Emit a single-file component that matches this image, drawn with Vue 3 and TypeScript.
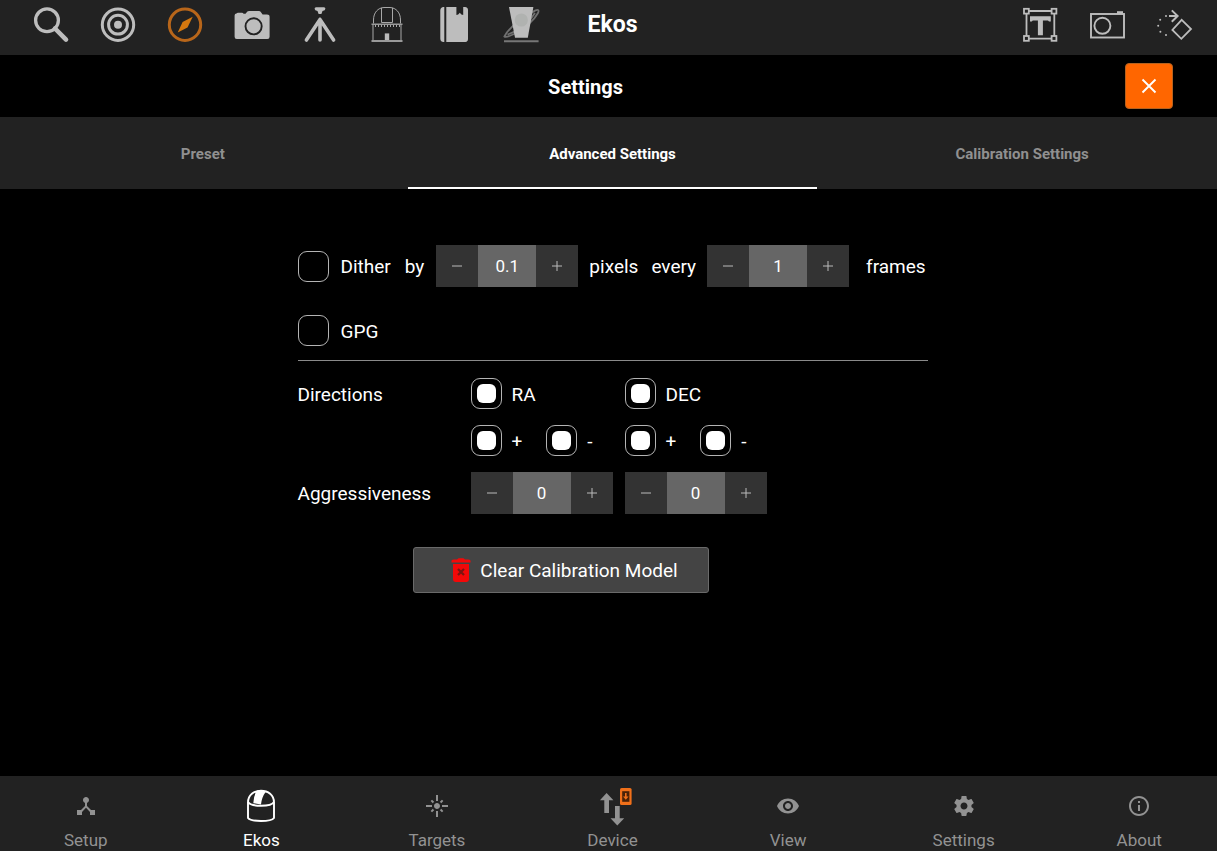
<script setup lang="ts">
import { reactive, ref } from 'vue'

interface Icon {
  label: string
  body: string
  active?: boolean
}

const modules: Icon[] = [
  {
    label: 'Search',
    body: '<circle cx="14" cy="13.3" r="11.4" fill="none" stroke="currentColor" stroke-width="3.3"/><path d="M22 21.5 L33 32.6" stroke="currentColor" stroke-width="4.6" stroke-linecap="round"/>',
  },
  {
    label: 'Focus',
    body: '<g fill="none" stroke="currentColor" stroke-width="3"><circle cx="18" cy="17.7" r="15.7"/><circle cx="18" cy="17.7" r="9.4"/></g><circle cx="18" cy="17.7" r="4" fill="currentColor"/>',
  },
  {
    label: 'Guide',
    active: true,
    body: '<circle cx="18" cy="17.7" r="15.7" fill="none" stroke="currentColor" stroke-width="3"/><path d="M25.7 9.7 L20.5 20.4 L10.7 25.4 L15.6 15Z" fill="#d4780f"/>',
  },
  {
    label: 'Capture',
    body: '<path d="M2.5 6.5 Q3 5.8 4 5.8 H8 Q9 5.8 9.6 6.7 H11.5 L13.4 4.6 Q14 4 15 4 H25 Q26 4 26.6 4.7 L28.6 7.6 H33 Q35.6 7.6 35.6 10 V29.8 Q35.6 32 33.4 32 H2.8 Q.6 32 .6 29.8 V8.6 Q.6 6.5 2.5 6.5Z" fill="currentColor"/><circle cx="19.6" cy="19.3" r="8.1" fill="none" stroke="#222" stroke-width="1.9"/>',
  },
  {
    label: 'Mount',
    body: '<path d="M14 .3 H22 Q23.4 .3 23.4 1.8 Q23.4 3.6 20.5 4 L19.4 7 H16.6 L15.5 4 Q12.6 3.6 12.6 1.8 Q12.6 .3 14 .3Z" fill="currentColor"/><path d="M18 12.5 L4.4 33 M18 12.5 L31.6 33 M18 12.5 V33" fill="none" stroke="currentColor" stroke-width="3.6" stroke-linecap="round"/>',
  },
  {
    label: 'Observatory',
    body: '<g fill="none" stroke="#a8a8a8" stroke-width="1"><path d="M4.5 16.5 V13 C4.5 5.5 9 .8 15 .5 H21 C27 .8 31.5 5.5 31.5 13 V16.5"/><path d="M12.5 .8 V15.5 H23.5 V.8"/><path d="M4 18 V33 M32 18 V33"/></g><path d="M2.5 16.4 H33.5 V18 H2.5Z M2.5 33 H33.5 V35 H2.5Z" fill="#9a9a9a"/><path d="M6 19 H31" stroke="#a8a8a8" stroke-width="2" stroke-dasharray="1 2"/><path d="M15.8 26.4 H20.2 V33 H15.8Z" fill="#bbb"/>',
  },
  {
    label: 'Logs',
    body: '<path d="M8.3 0 V35 H7 Q4.3 34.5 4.3 31.5 V3.5 Q4.3 .5 7 0Z M10.3 0 H20.4 V8 L22.2 7.6 L23.8 5.7 L25.4 7.6 L27.2 8 V0 H29 Q32 .3 32 3 V32 Q32 34.7 29.4 35 H10.3Z" fill="currentColor"/>',
  },
  {
    label: 'Planner',
    body: '<path d="M1.4 29.5 Q7 18 32 3.6 Q37 1.5 35 6 Q29 17 11 27 Q3 31 1.4 29.5Z M4.5 27.5 Q22 22 32 6" fill="none" stroke="#707070" stroke-width="1.8"/><path d="M6 0 H30.4 L24.8 30.7 H12Z" fill="currentColor"/><circle cx="18.3" cy="13" r="6.6" fill="#b0b2b0"/><path d="M1 34.2 H35.6" stroke="#777" stroke-width="1.9"/>',
  },
]

const tools: Icon[] = [
  {
    label: 'Labels',
    body: '<g fill="none" stroke="currentColor" stroke-width="1.8"><path d="M7 4 H30 M7 31.6 H30 M4.5 7 V29 M32.3 7 V29"/><rect x="2" y="1.8" width="4.8" height="4.8"/><rect x="29.6" y="1.8" width="4.8" height="4.8"/><rect x="2" y="29" width="4.8" height="4.8"/><rect x="29.6" y="29" width="4.8" height="4.8"/></g><path d="M8 9.3 H28.8 V14.6 H27 L26 13.4 H20.9 V28.2 H15.9 V13.4 H10.8 L9.8 14.6 H8Z" fill="currentColor"/>',
  },
  {
    label: 'Field of view',
    body: '<g fill="none" stroke="currentColor" stroke-width="1.9"><rect x="2" y="7" width="33" height="23.5"/><circle cx="13.4" cy="18.8" r="8"/></g><path d="M28 4.2 H34 V7 H28Z" fill="currentColor"/>',
  },
  {
    label: 'Rotate',
    body: '<g fill="none" stroke="currentColor" stroke-width="2"><path d="M25.7 12.9 L35 22 L25.3 31.8 L16.4 23Z" stroke-width="1.8"/><path d="M13 9 H21.5 M15.8 3.4 L21.6 9 L15.8 14.8"/></g><g fill="currentColor"><circle cx="10" cy="9" r="1"/><circle cx="4.2" cy="12.7" r="1"/><circle cx="2.2" cy="18.7" r="1"/><circle cx="4.4" cy="24.7" r="1"/><circle cx="10" cy="28" r="1"/></g>',
  },
]

const sections: Icon[] = [
  {
    label: 'Setup',
    body: '<path transform="translate(6 6)" fill="currentColor" d="M17 16l-4-4V8.82C14.16 8.4 15 7.3 15 6c0-1.66-1.34-3-3-3S9 4.34 9 6c0 1.3.84 2.4 2 2.82V12l-4 4H3v5h5v-3.05l4-4.2 4 4.2V21h5v-5h-4z"/>',
  },
  {
    label: 'Ekos',
    active: true,
    body: '<g fill="none" stroke="currentColor" stroke-width="1.9"><path d="M5 30 V14.5 C5 7 11 2.7 18 2.7 C25 2.7 31 7 31 14.5 V30 C28 34 8 34 5 30Z"/><path d="M5 14 C8 19 28 19 31 14"/></g><path d="M14 2.6 Q19 1.8 22.8 3.7 Q18.8 9 18 16.4 L10.3 15.2 Q10.5 7.5 14 2.6Z" fill="currentColor"/>',
  },
  {
    label: 'Targets',
    body: '<path transform="translate(6 6)" fill="currentColor" d="M7 11H1v2h6v-2zm2.17-3.24L7.05 5.64 5.64 7.05l2.12 2.12 1.41-1.41zM13 1h-2v6h2V1zm5.36 6.05l-1.41-1.41-2.12 2.12 1.41 1.41 2.12-2.12zM17 11v2h6v-2h-6zm-5-2c-1.66 0-3 1.34-3 3s1.34 3 3 3 3-1.34 3-3-1.34-3-3-3zm2.83 7.24l2.12 2.12 1.41-1.41-2.12-2.12-1.41 1.41zm-9.19.71l1.41 1.41 2.12-2.12-1.41-1.41-2.12 2.12zM11 23h2v-6h-2v6z"/>',
  },
  {
    label: 'Device',
    body: '<path d="M12.6 5 L19.4 12.3 H15 V25 H10.3 V12.3 H5.9Z M21 18 H25.7 V30.3 H30.2 L23.3 37.4 L16.5 30.3 H21Z" fill="currentColor"/><rect x="26" y="0" width="11.6" height="17" rx="1.6" fill="#f0701a"/><rect x="28.2" y="3.2" width="7.2" height="10.6" fill="#4a2208"/><path d="M31 5 H32.6 V8.6 H34.6 L31.8 11.8 L29 8.6 H31Z" fill="#f0701a"/>',
  },
  {
    label: 'View',
    body: '<path transform="translate(6 6)" fill="currentColor" d="M12 4.5C7 4.5 2.73 7.61 1 12c1.73 4.39 6 7.5 11 7.5s9.27-3.11 11-7.5c-1.73-4.39-6-7.5-11-7.5zM12 17c-2.76 0-5-2.24-5-5s2.24-5 5-5 5 2.24 5 5-2.24 5-5 5zm0-8c-1.66 0-3 1.34-3 3s1.34 3 3 3 3-1.34 3-3-1.34-3-3-3z"/>',
  },
  {
    label: 'Settings',
    body: '<path transform="translate(6 6)" fill="currentColor" d="M19.43 12.98c.04-.32.07-.64.07-.98s-.03-.66-.07-.98l2.11-1.65c.19-.15.24-.42.12-.64l-2-3.46c-.12-.22-.39-.3-.61-.22l-2.49 1c-.52-.4-1.08-.73-1.69-.98l-.38-2.65C14.46 2.18 14.25 2 14 2h-4c-.25 0-.46.18-.49.42l-.38 2.65c-.61.25-1.17.59-1.69.98l-2.49-1c-.23-.09-.49 0-.61.22l-2 3.46c-.13.22-.07.49.12.64l2.11 1.65c-.04.32-.07.65-.07.98s.03.66.07.98l-2.11 1.65c-.19.15-.24.42-.12.64l2 3.46c.12.22.39.3.61.22l2.49-1c.52.4 1.08.73 1.69.98l.38 2.65c.03.24.24.42.49.42h4c.25 0 .46-.18.49-.42l.38-2.65c.61-.25 1.17-.59 1.69-.98l2.49 1c.23.09.49 0 .61-.22l2-3.46c.12-.22.07-.49-.12-.64l-2.11-1.65zM12 15.5c-1.93 0-3.5-1.57-3.5-3.5s1.57-3.5 3.5-3.5 3.5 1.57 3.5 3.5-1.57 3.5-3.5 3.5z"/>',
  },
  {
    label: 'About',
    body: '<path transform="translate(6 6)" fill="currentColor" d="M11 7h2v2h-2zm0 4h2v6h-2zm1-9C6.48 2 2 6.48 2 12s4.48 10 10 10 10-4.48 10-10S17.52 2 12 2zm0 18c-4.41 0-8-3.59-8-8s3.59-8 8-8 8 3.59 8 8-3.59 8-8 8z"/>',
  },
]

const tabs = ['Preset', 'Advanced Settings', 'Calibration Settings']
const currentTab = ref('Advanced Settings')

type NumberKey = 'ditherPixels' | 'ditherFrames' | 'raAggr' | 'decAggr'

const values = reactive<Record<NumberKey, number>>({
  ditherPixels: 0.1,
  ditherFrames: 1,
  raAggr: 0,
  decAggr: 0,
})
const steps: Record<NumberKey, number> = { ditherPixels: 0.1, ditherFrames: 1, raAggr: 0.1, decAggr: 0.1 }

const dither = ref(false)
const gpg = ref(false)

const axes = reactive([
  { name: 'RA', key: 'raAggr' as NumberKey, on: true, plus: true, minus: true },
  { name: 'DEC', key: 'decAggr' as NumberKey, on: true, plus: true, minus: true },
])

function bump(key: NumberKey, sign: number) {
  values[key] = Math.max(0, Math.round((values[key] + sign * steps[key]) * 10) / 10)
}
</script>

<template>
  <div class="app">
    <header class="topbar">
      <div class="modules">
        <button v-for="m in modules" :key="m.label" type="button" class="icon-btn" :class="{ active: m.active }" :aria-label="m.label">
          <svg viewBox="0 0 36 36" v-html="m.body"></svg>
        </button>
      </div>
      <h1>Ekos</h1>
      <div class="tools">
        <button v-for="t in tools" :key="t.label" type="button" class="icon-btn" :aria-label="t.label">
          <svg viewBox="0 0 36 36" v-html="t.body"></svg>
        </button>
      </div>
    </header>

    <div class="dialog-head">
      <h2>Settings</h2>
      <button type="button" class="close" aria-label="Close">
        <svg viewBox="0 0 16 16"><path d="M1.5 1.5 L14.5 14.5 M14.5 1.5 L1.5 14.5" fill="none" stroke="#fff" stroke-width="1.9" /></svg>
      </button>
    </div>

    <div class="tabs" role="tablist">
      <button
        v-for="t in tabs"
        :key="t"
        type="button"
        role="tab"
        :aria-selected="t === currentTab"
        :class="{ current: t === currentTab }"
        @click="currentTab = t"
      >{{ t }}</button>
    </div>

    <main>
      <form class="form" @submit.prevent>
        <div class="dither">
          <label class="check"><input v-model="dither" type="checkbox" /><span>Dither</span></label>
          <label class="text by" for="dither-pixels">by</label>
          <div class="stepper">
            <button type="button" aria-label="Fewer pixels" @click="bump('ditherPixels', -1)"><svg viewBox="0 0 12 12"><path d="M1 6 H11" /></svg></button>
            <input id="dither-pixels" v-model.number="values.ditherPixels" type="text" inputmode="decimal" />
            <button type="button" aria-label="More pixels" @click="bump('ditherPixels', 1)"><svg viewBox="0 0 12 12"><path d="M1 6 H11 M6 1 V11" /></svg></button>
          </div>
          <span class="text pixels">pixels</span>
          <label class="text every" for="dither-frames">every</label>
          <div class="stepper">
            <button type="button" aria-label="Fewer frames" @click="bump('ditherFrames', -1)"><svg viewBox="0 0 12 12"><path d="M1 6 H11" /></svg></button>
            <input id="dither-frames" v-model.number="values.ditherFrames" type="text" inputmode="numeric" />
            <button type="button" aria-label="More frames" @click="bump('ditherFrames', 1)"><svg viewBox="0 0 12 12"><path d="M1 6 H11 M6 1 V11" /></svg></button>
          </div>
          <span class="text frames">frames</span>
        </div>

        <div class="gpg">
          <label class="check"><input v-model="gpg" type="checkbox" /><span>GPG</span></label>
        </div>

        <hr />

        <div class="grid">
          <span class="text">Directions</span>
          <label v-for="a in axes" :key="a.name" class="check tight"><input v-model="a.on" type="checkbox" /><span>{{ a.name }}</span></label>
        </div>
        <div class="grid spaced">
          <span></span>
          <div v-for="a in axes" :key="a.name" class="pair">
            <label class="check tight"><input v-model="a.plus" type="checkbox" /><span>+</span></label>
            <label class="check tight"><input v-model="a.minus" type="checkbox" /><span>-</span></label>
          </div>
        </div>
        <div class="grid spaced">
          <span class="text">Aggressiveness</span>
          <div v-for="a in axes" :key="a.name" class="stepper">
            <button type="button" :aria-label="`Decrease ${a.name}`" @click="bump(a.key, -1)"><svg viewBox="0 0 12 12"><path d="M1 6 H11" /></svg></button>
            <input v-model.number="values[a.key]" type="text" inputmode="decimal" :aria-label="`${a.name} aggressiveness`" />
            <button type="button" :aria-label="`Increase ${a.name}`" @click="bump(a.key, 1)"><svg viewBox="0 0 12 12"><path d="M1 6 H11 M6 1 V11" /></svg></button>
          </div>
        </div>

        <button type="button" class="clear">
          <svg viewBox="0 0 20 24">
            <path d="M.5 2.6 Q1 1.6 3 1.6 H6 L7.5 .2 H12.5 L14 1.6 H17 Q19 1.6 19.5 2.6 V4.6 H.5Z M2 6 H18 V21.6 Q18 24 15.6 24 H4.4 Q2 24 2 21.6Z" fill="#f30808" />
            <path d="M7 11 L13 17 M13 11 L7 17" stroke="#7a1512" stroke-width="2.2" />
          </svg>
          <span class="text">Clear Calibration Model</span>
        </button>
      </form>
    </main>

    <nav class="bottom">
      <a v-for="s in sections" :key="s.label" href="#" :class="{ active: s.active }" @click.prevent>
        <svg viewBox="0 0 36 36" v-html="s.body"></svg>
        <span>{{ s.label }}</span>
      </a>
    </nav>
  </div>
</template>

<style>
body {
  margin: 0;
  background: #000;
  overflow: hidden;
}
</style>

<style scoped>
.app {
  box-sizing: border-box;
  width: calc(100% + 12px);
  min-height: 100vh;
  margin-left: -2px;
  display: flex;
  flex-direction: column;
  background: #000;
  color: #fff;
  font: 19px/24px Roboto, "Liberation Sans", sans-serif;
}

button,
input {
  font: inherit;
  color: inherit;
  border: 0;
  padding: 0;
  margin: 0;
}

h1,
h2 {
  margin: 0;
}

svg {
  display: block;
  overflow: visible;
}

.topbar {
  display: grid;
  grid-template-columns: 1fr auto 1fr;
  align-items: start;
  padding: 7px 35px 12px;
  background: #222;
}

.topbar h1 {
  font-size: 23px;
  line-height: 36px;
}

.modules {
  display: flex;
  justify-content: space-between;
  width: 506px;
}

.tools {
  display: flex;
  justify-content: flex-end;
  gap: 31px;
}

.icon-btn {
  width: 36px;
  height: 36px;
  background: none;
  color: #bdbdbd;
}

.icon-btn.active {
  color: #b8661a;
}

.dialog-head {
  display: grid;
  align-items: center;
  padding: 8px 54px 8px 0;
}

.dialog-head > * {
  grid-area: 1 / 1;
}

.dialog-head h2 {
  justify-self: center;
  padding-top: 2px;
  font-size: 20px;
}

.close {
  justify-self: end;
  display: grid;
  place-items: center;
  box-sizing: border-box;
  width: 48px;
  height: 46px;
  border: 1px solid #b5621f;
  border-radius: 4px;
  background: #ff6600;
}

.close svg {
  width: 16px;
  height: 16px;
}

.tabs {
  display: grid;
  grid-template-columns: repeat(3, 1fr);
  background: #222;
}

.tabs button {
  box-sizing: border-box;
  height: 72px;
  padding-top: 4px;
  border-bottom: 2px solid transparent;
  background: none;
  color: #909090;
  font-size: 15px;
  font-weight: 700;
}

.tabs .current {
  color: #fff;
  border-bottom-color: #fff;
}

main {
  flex: 1;
  display: flex;
  justify-content: center;
  align-items: flex-start;
  padding-top: 56px;
}

.form {
  width: 630px;
}

.dither,
.check,
.stepper,
.pair {
  display: flex;
  align-items: center;
}

.text,
.check span {
  padding-top: 2px;
}

.check {
  gap: 12px;
}

.check.tight {
  gap: 10px;
}

.check input {
  appearance: none;
  box-sizing: border-box;
  display: grid;
  place-items: center;
  width: 31px;
  height: 31px;
  border: 1px solid #b4b4b4;
  border-radius: 9px;
  background: #000;
}

.check input:checked::before {
  content: "";
  width: 19px;
  height: 19px;
  border-radius: 6px;
  background: #fff;
}

.by {
  margin: 0 12px 0 14px;
}

.pixels {
  margin: 0 13px 0 11px;
}

.every {
  margin-right: 11px;
}

.frames {
  margin-left: 17px;
}

.stepper {
  flex: none;
  width: 142px;
  height: 42px;
  background: #333;
}

.stepper button {
  flex: 1;
  display: grid;
  place-items: center;
  height: 100%;
  background: none;
}

.stepper svg {
  width: 12px;
  height: 12px;
  fill: none;
  stroke: #bbb;
  stroke-width: 1;
}

.stepper input {
  width: 58px;
  height: 100%;
  background: #666;
  font-size: 17px;
  text-align: center;
}

.gpg {
  display: flex;
  margin-top: 28px;
}

hr {
  height: 1px;
  margin: 14px 0 17px;
  border: 0;
  background: #8a8a8a;
}

.grid {
  display: grid;
  grid-template-columns: 161px 142px 142px;
  column-gap: 12px;
  align-items: center;
}

.spaced {
  margin-top: 16px;
}

.pair {
  gap: 24px;
}

.clear {
  display: flex;
  align-items: center;
  justify-content: center;
  gap: 9px;
  box-sizing: border-box;
  width: 296px;
  height: 46px;
  margin: 33px 0 0 115px;
  padding-left: 8px;
  border: 1px solid #6a6a6a;
  border-radius: 3px;
  background: #444;
}

.clear svg {
  width: 20px;
  height: 24px;
}

.bottom {
  display: grid;
  grid-template-columns: repeat(7, 1fr);
  padding-top: 12px;
  background: #222;
}

.bottom a {
  display: flex;
  flex-direction: column;
  align-items: center;
  gap: 5px;
  color: #929292;
  font-size: 17px;
  line-height: 22px;
  text-decoration: none;
}

.bottom .active {
  color: #fff;
}

.bottom svg {
  width: 36px;
  height: 36px;
}
</style>
